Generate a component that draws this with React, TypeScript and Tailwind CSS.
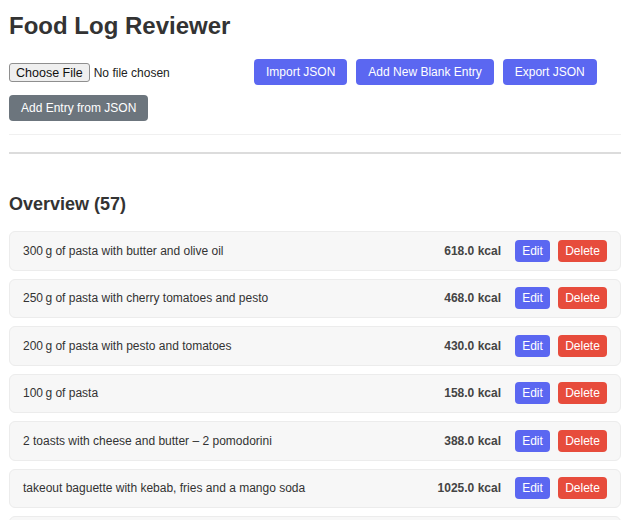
const entries = [
  { text: "300\u2009g of pasta with butter and olive oil", kcal: 618 },
  { text: "250\u2009g of pasta with cherry tomatoes and pesto", kcal: 468 },
  { text: "200\u2009g of pasta with pesto and tomatoes", kcal: 430 },
  { text: "100\u2009g of pasta", kcal: 158 },
  { text: "2 toasts with cheese and butter \u2013 2 pomodorini", kcal: 388 },
  { text: "takeout baguette with kebab, fries and a mango soda", kcal: 1025 },
  { text: "espresso with a croissant", kcal: 290 },
];

const btn = "h-[26px] px-[12px] rounded text-[12px] text-white";

export default function App() {
  return (
    <div className="px-[9px] pt-[10px] font-['Liberation_Sans',Arial,sans-serif] text-[#333]">
      <h1 className="text-[24px] font-bold leading-[32px]">Food Log Reviewer</h1>

      <div className="mt-[17px] pb-[13px] border-b border-[#f0f0f0] flex flex-wrap items-center gap-x-[9px] gap-y-[10px]">
        <input
          type="file"
          className="w-[236px] text-[12px] text-[#222] file:mr-[4px] file:px-[6px] file:h-[19px] file:border file:border-[#8f8f8f] file:rounded-[3px] file:bg-[#efefef] file:text-[12.5px] file:text-[#111]"
        />
        <button className={`${btn} bg-[#5b67f1]`}>Import JSON</button>
        <button className={`${btn} bg-[#5b67f1]`}>Add New Blank Entry</button>
        <button className={`${btn} bg-[#5b67f1]`}>Export JSON</button>
        <button className={`${btn} bg-[#6c757d]`}>Add Entry from JSON</button>
      </div>

      <hr className="mt-[17px] border-t-2 border-[#dcdcdc]" />

      <h2 className="mt-[38px] text-[18px] font-bold leading-[24px]">Overview (57)</h2>

      <div className="mt-[15px] flex flex-col gap-[8px]">
        {entries.map((e, i) => (
          <div
            key={i}
            className="h-[39.5px] flex items-center bg-[#f7f7f7] border border-[#ececec] rounded-md pl-[13px] pr-[13px]"
          >
            <span className="flex-1 text-[12px] text-[#333]">{e.text}</span>
            <span className="text-[12px] font-bold text-[#444] mr-[14px]">{e.kcal.toFixed(1)} kcal</span>
            <button className="h-[22px] w-[35px] rounded text-[12px] text-white bg-[#5b67f1] mr-[8px]">Edit</button>
            <button className="h-[22px] w-[49px] rounded text-[12px] text-white bg-[#e74c3c]">Delete</button>
          </div>
        ))}
      </div>
    </div>
  );
}
